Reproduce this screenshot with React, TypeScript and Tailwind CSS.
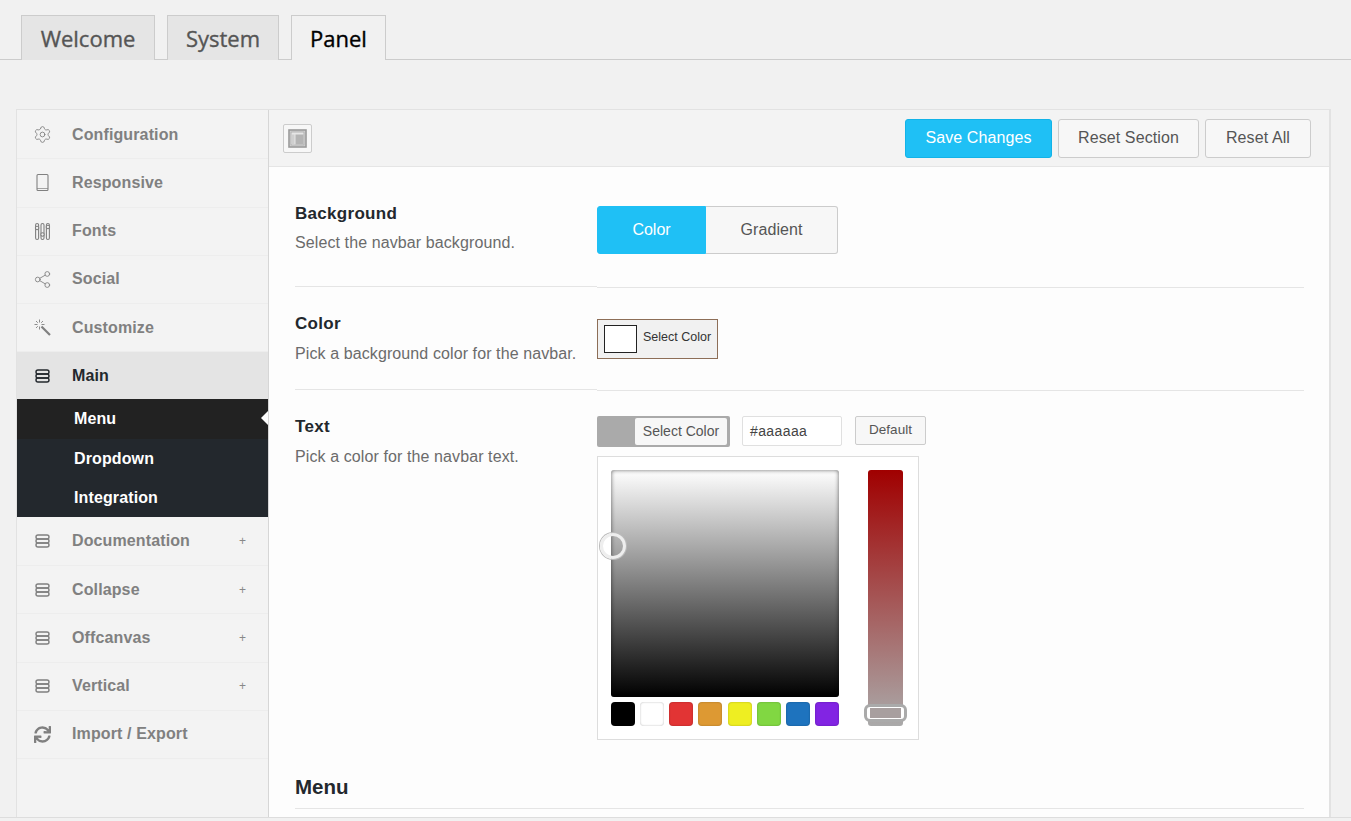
import { Settings, Share2 } from 'lucide-react';
import { FaSync } from 'react-icons/fa';
import type { ReactNode } from 'react';

function StackIcon() {
  return (
    <svg width="19" height="16" viewBox="0 0 19 16" fill="none" stroke="currentColor" strokeWidth="1.4">
      <rect x="3" y="2" width="13" height="4" rx="2" />
      <rect x="3" y="6" width="13" height="4" rx="2" />
      <rect x="3" y="10" width="13" height="4" rx="2" />
    </svg>
  );
}

function TabletIcon() {
  return (
    <svg width="19" height="19" viewBox="0 0 19 19" fill="none" stroke="currentColor" strokeWidth="1.1">
      <rect x="4" y="1.5" width="11" height="16" rx="1" />
      <path d="M4 15.5h11" strokeWidth="0.7" />
    </svg>
  );
}

function FontsIcon() {
  return (
    <svg width="19" height="19" viewBox="0 0 19 19" fill="none" stroke="currentColor" strokeWidth="1.1">
      <rect x="2.6" y="1.5" width="3" height="16" rx="1.5" />
      <rect x="8" y="1.5" width="3" height="16" rx="1.5" />
      <rect x="13.4" y="1.5" width="3" height="16" rx="1.5" />
      <circle cx="4.1" cy="6" r="1.7" fill="#f3f3f3" />
      <circle cx="9.5" cy="12.5" r="1.7" fill="#f3f3f3" />
      <circle cx="14.9" cy="5" r="1.7" fill="#f3f3f3" />
    </svg>
  );
}

function WandIcon() {
  return (
    <svg width="19" height="19" viewBox="0 0 19 19" fill="none" stroke="currentColor">
      <path d="M8.5 8.5L17 17" strokeWidth="2.2" />
      <path d="M6.5 1.5v3M6.5 8.5v3M1.5 6.5h3M8.5 6.5h3M3 3l1.8 1.8M10 3L8.2 4.8M3 10l1.8-1.8" strokeWidth="0.9" />
    </svg>
  );
}

function LayoutIcon() {
  return (
    <svg width="19" height="19" viewBox="0 0 19 19" fill="none">
      <rect x="1" y="1" width="17" height="17" stroke="#9a9a9a" strokeWidth="1.6" fill="#d4d4d4" />
      <rect x="3" y="3" width="13" height="13" stroke="#a8a8a8" strokeWidth="0.8" fill="#e6e6e6" />
      <rect x="7.5" y="5.5" width="8" height="10" fill="#b4b4b4" />
      <rect x="4" y="5.5" width="2.5" height="10" fill="#cfcfcf" />
    </svg>
  );
}

const topItems: { label: string; icon: ReactNode }[] = [
  { label: 'Configuration', icon: <Settings className="w-[19px] h-[19px]" strokeWidth={1.1} /> },
  { label: 'Responsive', icon: <TabletIcon /> },
  { label: 'Fonts', icon: <FontsIcon /> },
  { label: 'Social', icon: <Share2 className="w-[19px] h-[19px]" strokeWidth={1.1} /> },
  { label: 'Customize', icon: <WandIcon /> },
];

const swatches = ['bg-[#000000]', 'bg-[#ffffff]', 'bg-[#e23434]', 'bg-[#dd9933]', 'bg-[#eeee22]', 'bg-[#81d742]', 'bg-[#1e73be]', 'bg-[#8224e3]'];

function SideItem({ label, icon, plus }: { label: string; icon: ReactNode; plus?: boolean }) {
  return (
    <div className="h-[48.25px] flex items-center border-b border-[#ededed] text-[#808080]">
      <span className="w-[55px] pl-[16px] shrink-0 flex">{icon}</span>
      <span className="text-[16px] font-bold tracking-[0.12px]">{label}</span>
      {plus && <span className="ml-auto mr-[22px] text-[12px] font-normal text-[#888888]">+</span>}
    </div>
  );
}

function RowTitle({ title, text, tight }: { title: string; text: string; tight?: boolean }) {
  return (
    <>
      <h3 className="text-[17px] leading-[20px] font-bold tracking-[0.3px] text-[#23282d]">{title}</h3>
      <p className={`${tight ? 'mt-[9px]' : 'mt-[10px]'} text-[16px] leading-[20px] tracking-[0.1px] text-[#6b6b6b]`}>{text}</p>
    </>
  );
}

export default function App() {
  return (
    <div className="h-[821px] overflow-hidden bg-[#f1f1f1] font-['Liberation_Sans',Arial,sans-serif]">
      <div className="h-[60px] pt-[15px] pl-[21px] flex gap-[12px] border-b border-[#cccccc] font-['Open_Sans',sans-serif] text-[22px] [-webkit-text-stroke:0.35px_currentColor]">
        <div className="w-[134px] h-[45px] flex items-center justify-center bg-[#e5e5e5] border border-[#cccccc] border-b-0 text-[#555555]">Welcome</div>
        <div className="w-[112px] h-[45px] flex items-center justify-center bg-[#e5e5e5] border border-[#cccccc] border-b-0 text-[#555555]">System</div>
        <div className="w-[95px] h-[45px] flex items-center justify-center bg-[#f1f1f1] border border-[#cccccc] border-b-0 text-[#000000]">Panel</div>
      </div>

      <div className="ml-[16px] mr-[20px] mt-[49px] h-[708px] flex border border-[#e2e2e2] border-b-0 border-r-2">
        <aside className="w-[252px] shrink-0 pt-[1px] bg-[#f3f3f3] border-r border-[#d6d6d6]">
          {topItems.map((item) => (
            <SideItem key={item.label} label={item.label} icon={item.icon} />
          ))}
          <div className="h-[47px] flex items-center bg-[#e4e4e4] text-[#23282d]">
            <span className="w-[55px] pl-[16px] shrink-0 flex"><StackIcon /></span>
            <span className="text-[16px] font-bold tracking-[0.12px]">Main</span>
          </div>
          <div className="relative bg-[#23282d] text-white text-[16px] font-bold tracking-[0.12px]">
            <div className="h-[40px] pl-[57px] flex items-center bg-[#222222]">Menu</div>
            <div className="h-[39px] pl-[57px] flex items-center">Dropdown</div>
            <div className="h-[39px] pl-[57px] flex items-center">Integration</div>
            <span className="absolute right-0 top-[12px] border-y-[7px] border-y-transparent border-r-[7px] border-r-[#fdfdfd]" />
          </div>
          <div className="pt-[0.6px]">
            {['Documentation', 'Collapse', 'Offcanvas', 'Vertical'].map((label) => (
              <SideItem key={label} label={label} icon={<StackIcon />} plus />
            ))}
            <SideItem label="Import / Export" icon={<FaSync className="w-[19px] h-[17px]" />} />
          </div>
        </aside>

        <main className="flex-1 min-w-0 bg-[#fdfdfd]">
          <div className="h-[57px] bg-[#f3f3f3] border-b border-[#e5e5e5] flex items-center pl-[14px] pr-[18px]">
            <div className="w-[29px] h-[29px] border border-[#cccccc] rounded-[2px] bg-[#f7f7f7] flex items-center justify-center">
              <LayoutIcon />
            </div>
            <button className="ml-auto w-[147px] h-[39px] rounded-[3px] bg-[#1fc0f5] border border-[#12b3e8] text-white text-[16px] tracking-[0.1px]">Save Changes</button>
            <button className="ml-[6px] w-[141px] h-[39px] rounded-[3px] bg-[#f7f7f7] border border-[#cccccc] text-[#555555] text-[16px] tracking-[0.1px]">Reset Section</button>
            <button className="ml-[6px] w-[106px] h-[39px] rounded-[3px] bg-[#f7f7f7] border border-[#cccccc] text-[#555555] text-[16px] tracking-[0.1px]">Reset All</button>
          </div>

          <div className="pl-[26px] pr-[25px]">
            <div className="h-[120px] flex">
              <div className="w-[302px] shrink-0 h-[120px] pt-[37px] border-b border-[#e5e5e5]">
                <RowTitle tight title="Background" text="Select the navbar background." />
              </div>
              <div className="flex-1 h-[121px] pt-[39px] border-b border-[#e5e5e5]">
                <div className="h-[48px] flex text-[16px]">
                  <div className="w-[109px] flex items-center justify-center rounded-l-[3px] bg-[#1fc0f5] border border-[#1fc0f5] text-white">Color</div>
                  <div className="w-[132px] flex items-center justify-center rounded-r-[3px] bg-[#f7f7f7] border border-[#cccccc] border-l-0 text-[#555555] tracking-[0.1px]">Gradient</div>
                </div>
              </div>
            </div>

            <div className="h-[103px] flex">
              <div className="w-[302px] shrink-0 h-[103px] pt-[27px] border-b border-[#e5e5e5]">
                <RowTitle title="Color" text="Pick a background color for the navbar." />
              </div>
              <div className="flex-1 h-[104px] pt-[32px] border-b border-[#e5e5e5]">
                <div className="h-[40px] w-[121px] flex items-center gap-[6px] pl-[6px] bg-[#f1f1f1] border border-[#8d6e57] text-[12.5px] text-[#333333]">
                  <span className="w-[33px] h-[28px] bg-white border border-[#222222]" />
                  <span className="-mt-[4px]">Select Color</span>
                </div>
              </div>
            </div>

            <div className="pt-[26px] flex">
              <div className="w-[302px] shrink-0 pt-[1px]">
                <RowTitle title="Text" text="Pick a color for the navbar text." />
              </div>
              <div>
                <div className="flex items-start">
                  <div className="w-[133px] h-[31px] bg-[#aaaaaa] rounded-[2px] pl-[38px] py-[2px] pr-[3px]">
                    <div className="h-full bg-[#f7f7f7] rounded-[2px] flex items-center justify-center text-[14px] text-[#555555]">Select Color</div>
                  </div>
                  <div className="ml-[12px] w-[100px] h-[30px] bg-white border border-[#e0e0e0] rounded-[2px] pl-[7px] flex items-center text-[14px] text-[#444444] tracking-[0.4px]">#aaaaaa</div>
                  <div className="ml-[13px] w-[71px] h-[29px] bg-[#f7f7f7] border border-[#cccccc] rounded-[2px] flex items-center justify-center text-[13.5px] text-[#555555]">Default</div>
                </div>

                <div className="mt-[9px] w-[322px] h-[284px] bg-white border border-[#dddddd] pt-[13px] pl-[13px] flex">
                  <div className="w-[228px]">
                    <div className="relative w-[228px] h-[227px] rounded-[3px] bg-linear-to-b/srgb from-white to-black shadow-[inset_0_0_4px_rgba(0,0,0,0.6)]">
                      <span className="absolute left-[-11px] top-[63px] w-[26px] h-[26px] rounded-full border-[3px] border-[#eeeeee] shadow-[0_0_0_1px_#bbbbbb]" />
                    </div>
                    <div className="mt-[5px] flex justify-between">
                      {swatches.map((color) => (
                        <span key={color} className={`w-[24px] h-[24px] rounded-[4px] shadow-[inset_0_0_2px_rgba(0,0,0,0.3)] ${color}`} />
                      ))}
                    </div>
                  </div>
                  <div className="relative ml-[29px] w-[35px] h-[256px] rounded-[3px] bg-linear-to-b/srgb from-[#a00000] to-[#aaaaaa]">
                    <span className="absolute left-[-4px] top-[234px] w-[43px] h-[18px] rounded-[6px] border-[3px] border-[#aaaaaa] bg-white px-[3px] py-[1px] flex">
                      <span className="flex-1 bg-[#a89f9f]" />
                    </span>
                  </div>
                </div>
              </div>
            </div>

            <h2 className="mt-[35px] pb-[9px] border-b border-[#e5e5e5] text-[20.5px] leading-[24px] font-bold text-[#23282d]">Menu</h2>
          </div>
        </main>
      </div>
      <div className="border-t border-[#dddddd]" />
    </div>
  );
}
